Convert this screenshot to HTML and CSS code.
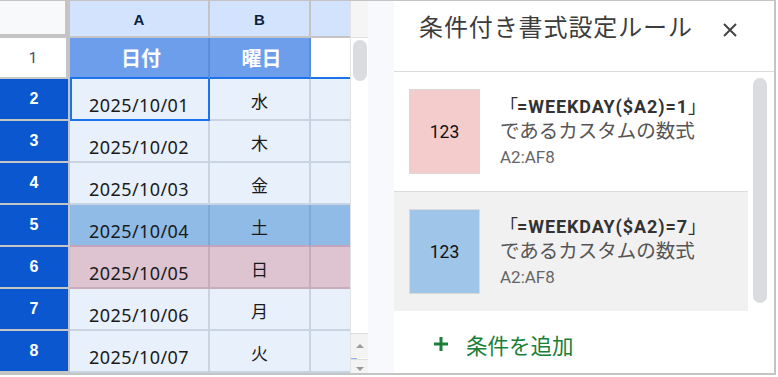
FILE: index.html
```html
<!DOCTYPE html>
<html lang="ja">
<head>
<meta charset="utf-8">
<title>条件付き書式設定ルール</title>
<link rel="stylesheet" href="styles.css">
</head>
<body>
<div class="frame">
  <div class="sheet">
    <div class="cell corner"></div>
    <div class="cell colh">A</div>
    <div class="cell colh">B</div>
    <div class="cell colh"></div>

    <div class="cell rh rh1">1</div>
    <div class="cell h1">日付</div>
    <div class="cell h1">曜日</div>
    <div class="cell h1c"></div>

    <div class="cell rh">2</div>
    <div class="cell d date active">2025/10/01</div>
    <div class="cell d wd">水</div>
    <div class="cell d"></div>

    <div class="cell rh">3</div>
    <div class="cell d date">2025/10/02</div>
    <div class="cell d wd">木</div>
    <div class="cell d"></div>

    <div class="cell rh">4</div>
    <div class="cell d date">2025/10/03</div>
    <div class="cell d wd">金</div>
    <div class="cell d"></div>

    <div class="cell rh">5</div>
    <div class="cell d sat date">2025/10/04</div>
    <div class="cell d sat wd">土</div>
    <div class="cell d sat"></div>

    <div class="cell rh">6</div>
    <div class="cell d sun date">2025/10/05</div>
    <div class="cell d sun wd">日</div>
    <div class="cell d sun"></div>

    <div class="cell rh">7</div>
    <div class="cell d date">2025/10/06</div>
    <div class="cell d wd">月</div>
    <div class="cell d"></div>

    <div class="cell rh">8</div>
    <div class="cell d date">2025/10/07</div>
    <div class="cell d wd">火</div>
    <div class="cell d"></div>
  </div>

  <div class="vscroll">
    <div class="vs-head"></div>
    <div class="vs-body"><div class="vs-thumb"></div></div>
    <div class="vs-btn vs-up"><span class="tri-up"></span></div>
    <div class="vs-mark"></div>
    <div class="vs-btn vs-down"><span class="tri-down"></span></div>
  </div>

  <div class="spacer"></div>

  <div class="panel">
    <div class="p-head">
      <div class="p-title">条件付き書式設定ルール</div>
      <svg class="p-close" width="14" height="14" viewBox="0 0 14 14"><path d="M1 1L13 13M13 1L1 13" stroke="#444" stroke-width="2" fill="none"/></svg>
    </div>
    <div class="p-list">
      <div class="cards">
        <div class="card">
          <div class="swatch pink">123</div>
          <div class="rule">
            <div class="r-formula"><span class="br br-open">「</span>=WEEKDAY($A2)=1<span class="br br-close">」</span></div>
            <div class="r-desc">であるカスタムの数式</div>
            <div class="r-range">A2:AF8</div>
          </div>
        </div>
        <div class="card hover">
          <div class="swatch blue">123</div>
          <div class="rule">
            <div class="r-formula"><span class="br br-open">「</span>=WEEKDAY($A2)=7<span class="br br-close">」</span></div>
            <div class="r-desc">であるカスタムの数式</div>
            <div class="r-range">A2:AF8</div>
          </div>
        </div>
      </div>
      <div class="p-track"><div class="p-thumb"></div></div>
    </div>
    <div class="p-add">
      <svg class="plus" width="16" height="16" viewBox="0 0 16 16"><path d="M8 1V15M1 8H15" stroke="#188038" stroke-width="3" fill="none"/></svg>
      <span class="add-text">条件を追加</span>
    </div>
  </div>
</div>
</body>
</html>
```

FILE: styles.css
```css
* { box-sizing: border-box; }
html, body { margin: 0; padding: 0; background: #ffffff; }
body { font-family: "Roboto", "Noto Sans CJK JP", sans-serif; }

.frame {
  display: flex;
  width: 776px;
  height: 375px;
  border-top: 1px solid #c4c4c4;
  border-right: 2px solid #c4c4c4;
  border-bottom: 2px solid #c4c4c4;
  overflow: hidden;
}

/* ---------- spreadsheet ---------- */
.sheet {
  width: 350px;
  flex: none;
  display: grid;
  grid-template-columns: 70px 140px 101px 39px;
  grid-template-rows: 37px 41px repeat(7, 42px);
}
.cell {
  display: flex;
  align-items: center;
  justify-content: center;
  overflow: hidden;
}
.corner {
  background: #f8f9fa;
  border-right: 5px solid #c4c4c4;
  border-bottom: 4px solid #c4c4c4;
}
.colh {
  background: #d3e3fd;
  border-right: 2px solid #c4c4c4;
  border-bottom: 2px solid #c4c4c4;
  font-family: "Liberation Sans", Arial, sans-serif;
  font-weight: bold;
  font-size: 15px;
  color: #0b1e40;
  padding-top: 1px;
}
.colh:nth-child(4) { border-right: none; }

.rh {
  background: #0b57d0;
  border-right: 2px solid #c4c4c4;
  border-bottom: 2px solid #c4c7c5;
  font-family: "Liberation Sans", Arial, sans-serif;
  font-weight: bold;
  font-size: 16px;
  color: #ffffff;
}
.rh1 {
  background: #ffffff;
  border-right: 4px solid #c4c4c4;
  font-family: "Roboto", sans-serif;
  font-weight: normal;
  font-size: 15px;
  color: #3d4a66;
}
.h1 {
  background: #6d9eeb;
  border-right: 2px solid #5b8ddc;
  border-bottom: 2px solid #1a73e8;
  font-family: "Noto Sans CJK JP", sans-serif;
  font-weight: bold;
  font-size: 20px;
  color: #ffffff;
  padding-left: 4px;
}
.h1c {
  background: #ffffff;
  border-bottom: 2px solid #1a73e8;
}

.d {
  background: #e8f0fc;
  border-right: 2px solid #c9d4e3;
  border-bottom: 2px solid #c9d4e3;
}
.d:nth-child(4n) { border-right: none; }
.date {
  align-items: flex-end;
  font-family: "Noto Sans", sans-serif;
  font-size: 18px;
  letter-spacing: 0.4px;
  color: #1a1a1a;
  line-height: 22px;
  padding-bottom: 3px;
}
.wd {
  font-family: "Noto Sans CJK JP", sans-serif;
  font-size: 17px;
  color: #1a1a1a;
  padding-top: 3px;
}
.active {
  border-right: 2px solid #1a73e8;
  border-bottom: 2px solid #1a73e8;
  box-shadow: inset 2px 0 0 #1a73e8;
}
.sat {
  background: #8fbbe6;
  border-right-color: #7ea9d8;
  border-bottom-color: #c3a6bb;
}
.sun {
  background: #dec4d0;
  border-right-color: #c9abba;
  border-bottom-color: #c9acbb;
}

/* ---------- sheet vertical scrollbar ---------- */
.vscroll {
  width: 18px;
  flex: none;
  display: flex;
  flex-direction: column;
  border-left: 1px solid #e3e3e3;
  background: #ffffff;
}
.vs-head {
  height: 37px;
  flex: none;
  background: #f5f5f5;
  border-bottom: 1px solid #e0e0e0;
}
.vs-body { flex: 1; padding: 2px 1px 0 2px; }
.vs-thumb {
  width: 14px;
  height: 41px;
  border-radius: 7px;
  background: #dadce0;
}
.vs-btn {
  flex: none;
  display: flex;
  align-items: center;
  justify-content: center;
  background: #f3f3f3;
}
.vs-up { height: 25px; border-top: 1px solid #dcdcdc; }
.vs-mark { height: 1px; width: 6px; background: #8ab4f8; }
.vs-down { height: 14px; border-top: 1px solid #dcdcdc; }
.tri-up {
  width: 0; height: 0;
  border-left: 4px solid transparent;
  border-right: 4px solid transparent;
  border-bottom: 4px solid #9a9a9a;
}
.tri-down {
  width: 0; height: 0;
  border-left: 4px solid transparent;
  border-right: 4px solid transparent;
  border-top: 4px solid #9a9a9a;
  margin-top: 4px;
}

.spacer {
  width: 26px;
  flex: none;
  background: #f8f9fc;
}

/* ---------- side panel ---------- */
.panel {
  width: 380px;
  flex: none;
  display: flex;
  flex-direction: column;
  background: #ffffff;
}
.p-head {
  height: 71px;
  flex: none;
  display: flex;
  justify-content: space-between;
  align-items: flex-start;
  padding: 8px 37px 0 25px;
  border-bottom: 1px solid #dadce0;
}
.p-title {
  font-family: "Noto Sans CJK JP", sans-serif;
  font-size: 24px;
  line-height: 34px;
  letter-spacing: 0.9px;
  color: #3c3c3c;
}
.p-close { margin-top: 14px; }

.p-list {
  height: 239px;
  flex: none;
  display: flex;
}
.cards { width: 354px; flex: none; }
.card {
  height: 120px;
  display: flex;
  align-items: center;
  gap: 20px;
  padding-left: 15px;
  border-bottom: 1px solid #dadce0;
  background: #ffffff;
}
.card.hover {
  height: 119px;
  background: #f1f1f1;
  border-bottom: none;
}
.swatch {
  width: 71px;
  height: 85px;
  flex: none;
  display: flex;
  align-items: center;
  justify-content: center;
  border: 1px solid #d9d9d9;
  font-family: "Roboto", sans-serif;
  font-size: 17.5px;
  color: #111111;
}
.swatch.pink { background: #f4cccc; }
.swatch.blue { background: #9fc5e8; }
.rule { padding-top: 5px; }
.r-formula {
  display: flex;
  font-family: "Roboto", sans-serif;
  font-weight: bold;
  font-size: 18px;
  letter-spacing: 0.9px;
  line-height: 22px;
  color: #333333;
}
.br {
  font-family: "Roboto", "Noto Sans CJK JP", sans-serif;
  font-weight: normal;
  letter-spacing: 0;
  width: 17px;
  display: inline-block;
  white-space: nowrap;
}
.br-open { text-align: right; }
.br-close { text-align: left; }
.r-desc {
  font-family: "Noto Sans CJK JP", sans-serif;
  font-size: 19.5px;
  line-height: 24px;
  color: #555555;
}
.r-range {
  font-family: "Roboto", sans-serif;
  font-size: 17px;
  line-height: 30px;
  color: #666666;
}
.p-track { width: 26px; flex: none; padding: 6px 0 0 5px; }
.p-thumb {
  width: 14px;
  height: 225px;
  border-radius: 7px;
  background: #dadce0;
}

.p-add {
  flex: 1;
  display: flex;
  align-items: center;
  gap: 17px;
  padding: 4px 0 0 39px;
}
.add-text {
  font-family: "Noto Sans CJK JP", sans-serif;
  font-size: 21.5px;
  color: #188038;
}
```
